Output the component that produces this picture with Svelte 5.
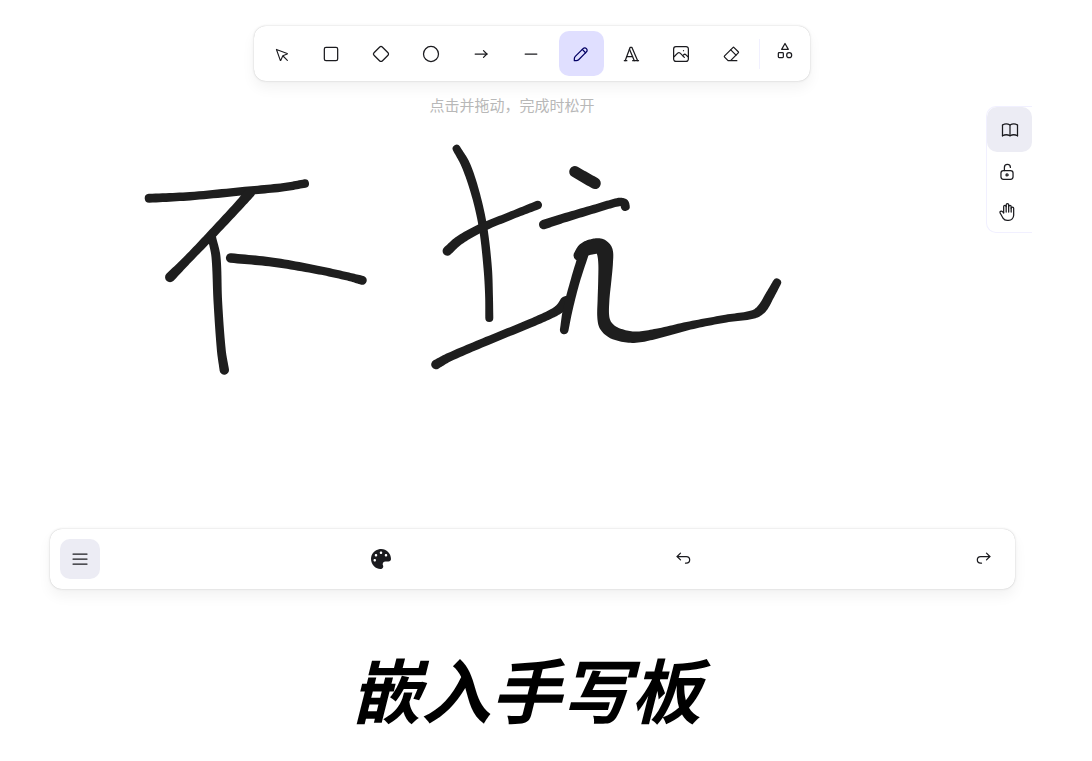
<script lang="ts">
  type Point = [number, number, number];

  const tools = [
    { id: 'select', label: '选择', box: 22, paths: ['M6 6l4.153 11.793a.365.365 0 0 0 .331.207.366.366 0 0 0 .332-.207L13 13l4.787-1.994a.355.355 0 0 0 .213-.323.355.355 0 0 0-.213-.323L6 6z', 'M13.5 13.5L18 18'] },
    { id: 'rectangle', label: '矩形', box: 24, paths: ['M6 4h12a2 2 0 0 1 2 2v12a2 2 0 0 1-2 2H6a2 2 0 0 1-2-2V6a2 2 0 0 1 2-2z'] },
    { id: 'diamond', label: '菱形', box: 24, paths: ['M10.5 20.4l-6.9-6.9c-.781-.781-.781-2.219 0-3l6.9-6.9c.781-.781 2.219-.781 3 0l6.9 6.9c.781.781.781 2.219 0 3l-6.9 6.9c-.781.781-2.219.781-3 0z'] },
    { id: 'ellipse', label: '椭圆', box: 24, paths: ['M3 12a9 9 0 1 0 18 0a9 9 0 1 0-18 0'] },
    { id: 'arrow', label: '箭头', box: 24, paths: ['M5 12h14', 'M15 16l4-4', 'M15 8l4 4'] },
    { id: 'line', label: '线条', box: 20, paths: ['M4.167 10h11.666'] },
    { id: 'draw', label: '自由书写', box: 20, paths: ['M7.643 15.69l7.774-7.773a2.357 2.357 0 1 0-3.334-3.334L4.31 12.357a3.333 3.333 0 0 0-.977 2.357v1.953h1.953c.884 0 1.732-.352 2.357-.977Z', 'M11.25 5.417l3.333 3.333'] },
    { id: 'text', label: '文字', box: 24, paths: ['M4 20h3', 'M14 20h7', 'M6.9 15h6.9', 'M10.2 6.3L16 20', 'M5 20l6-16h2l7 16'] },
    { id: 'image', label: '插入图像', box: 20, paths: ['M12.5 6.667h.01', 'M4.91 2.625h10.18a2.284 2.284 0 0 1 2.285 2.284v10.182a2.284 2.284 0 0 1-2.284 2.284H4.909a2.284 2.284 0 0 1-2.284-2.284V4.909a2.284 2.284 0 0 1 2.284-2.284Z', 'M3.333 12.5l3.334-3.333c.773-.745 1.726-.745 2.5 0l4.166 4.166', 'M11.667 11.667l.833-.834c.774-.744 1.726-.744 2.5 0l1.667 1.667'] },
    { id: 'eraser', label: '橡皮', box: 24, paths: ['M19 20H8.5l-4.21-4.3a1 1 0 0 1 0-1.41l10-10a1 1 0 0 1 1.41 0l5 5a1 1 0 0 1 0 1.41L11.5 20', 'M18 13.3L11.7 7'] },
  ];

  const extra = { box: 24, paths: ['M12 3l-4 7h8z', 'M14 17a3 3 0 1 0 6 0a3 3 0 1 0-6 0', 'M5 14h4a1 1 0 0 1 1 1v4a1 1 0 0 1-1 1H5a1 1 0 0 1-1-1v-4a1 1 0 0 1 1-1z'] };
  const book = { box: 24, paths: ['M3 19a9 9 0 0 1 9 0a9 9 0 0 1 9 0', 'M3 6a9 9 0 0 1 9 0a9 9 0 0 1 9 0', 'M3 6v13', 'M12 6v13', 'M21 6v13'] };
  const lock = { box: 20, paths: ['M13.542 8.542H6.458a2.5 2.5 0 0 0-2.5 2.5v3.75a2.5 2.5 0 0 0 2.5 2.5h7.084a2.5 2.5 0 0 0 2.5-2.5v-3.75a2.5 2.5 0 0 0-2.5-2.5Z', 'M10 13.958a1.042 1.042 0 1 0 0-2.083 1.042 1.042 0 0 0 0 2.083Z', 'M7.4 8.5V5.4a3 3 0 0 1 6 0'] };
  const hand = { box: 24, paths: ['M8 13V5.5a1.5 1.5 0 0 1 3 0V12', 'M11 5.5v-2a1.5 1.5 0 1 1 3 0V12', 'M14 5.5a1.5 1.5 0 0 1 3 0V12', 'M17 7.5a1.5 1.5 0 0 1 3 0V16a6 6 0 0 1-6 6h-2h.208a6 6 0 0 1-5.012-2.7L7 19c-.312-.479-1.407-2.388-3.286-5.728a1.5 1.5 0 0 1 .536-2.022a1.867 1.867 0 0 1 2.28.28L8 13'] };
  const menu = { box: 20, paths: ['M3 5h14', 'M3 10h14', 'M3 15h14'] };
  const undo = { box: 20, paths: ['M7.5 10.833L4.167 7.5 7.5 4.167', 'M4.167 7.5h9.166a3.333 3.333 0 0 1 0 6.667H12.5'] };
  const redo = { box: 20, paths: ['M12.5 10.833L15.833 7.5 12.5 4.167', 'M15.833 7.5H6.667a3.333 3.333 0 1 0 0 6.667H7.5'] };

  // Each pen stroke is a list of [x, y, nib radius].
  const strokes: Point[][] = [
    [[149, 198.3, 4.5], [190, 196.2, 4.2], [245, 191, 4.2], [284, 187.2, 4.2], [305, 183.5, 4.2]],
    [[250, 192.5, 5.2], [240, 204, 4.8], [213, 233, 4.6], [188, 259, 4.4], [170, 277.3, 5]],
    [[212, 238, 4.2], [216, 257, 4.5], [217.8, 301, 4.3], [221.3, 350, 4.4], [224.3, 370, 4.7]],
    [[230.7, 258, 4.8], [273, 262.2, 4.6], [317, 269.8, 4.2], [347, 276.3, 4.1], [362.3, 280.3, 4.5]],
    [[456.5, 148.5, 4], [466, 165.5, 4.5], [476, 195.5, 4.3], [483.3, 229, 4.2], [487.7, 268, 4.2], [489, 295, 3.9], [489.3, 318, 4]],
    [[447.3, 251, 4.8], [459, 240.5, 4.6], [481, 228, 4.3], [510, 216, 4], [537.7, 205, 4.3]],
    [[436, 364.5, 4.8], [449, 357.3, 4.4], [487, 341, 4.2], [530, 323.4, 4.2], [553, 313, 4.4], [560.5, 307.8, 4.8], [565.5, 301.5, 5.4]],
    [[564.2, 330, 4.3], [567.7, 310, 4.8], [575, 281.7, 4.7], [583.3, 255, 5]],
    [[574.8, 171.7, 5.6], [595, 183.3, 5.8]],
    [[543.8, 224.5, 4.8], [563, 218.3, 4.5], [600, 207.3, 4.2], [619, 202, 4.2], [624.3, 203, 4.3], [625.3, 206.5, 4.5]],
    [[579, 255.5, 5.6], [584, 250, 7], [591, 247, 7.6], [600, 246.3, 7.8], [604.5, 251, 8.2], [605.6, 262, 7.4], [604.8, 280, 6.6], [603.5, 300, 5.9], [603.3, 317, 6], [606, 326, 6.6], [615, 333.3, 6.4], [634, 337.2, 5.7], [657, 333.6, 5], [690, 325.5, 4.2], [726, 318.6, 3.9], [753.3, 314.4, 4.3], [762, 308.5, 4.8], [769.5, 296, 4.6], [777, 282.5, 4.2]],
  ];

  function spline(points: Point[]): Point[] {
    const out: Point[] = [];
    for (let i = 0; i < points.length - 1; i++) {
      const p0 = points[Math.max(i - 1, 0)];
      const p1 = points[i];
      const p2 = points[i + 1];
      const p3 = points[Math.min(i + 2, points.length - 1)];
      const m1 = Math.hypot(p2[0] - p1[0], p2[1] - p1[1]);
      const before = i === 0 ? 0 : Math.hypot(p1[0] - p0[0], p1[1] - p0[1]);
      const after = i + 2 >= points.length ? 0 : Math.hypot(p3[0] - p2[0], p3[1] - p2[1]);
      for (let s = 0; s < 12; s++) {
        const t = s / 12;
        const t2 = t * t;
        const t3 = t2 * t;
        const mix = (k: number) => {
          const a = ((p2[k] - p0[k]) / (m1 + before)) * m1;
          const b = ((p3[k] - p1[k]) / (m1 + after)) * m1;
          return (2 * t3 - 3 * t2 + 1) * p1[k] + (t3 - 2 * t2 + t) * a + (3 * t2 - 2 * t3) * p2[k] + (t3 - t2) * b;
        };
        out.push([mix(0), mix(1), mix(2)]);
      }
    }
    out.push(points[points.length - 1]);
    return out;
  }

  function outline(points: Point[]): string {
    const line = spline(points);
    const left: string[] = [];
    const right: string[] = [];
    line.forEach(([x, y, r], i) => {
      const a = line[Math.max(i - 1, 0)];
      const b = line[Math.min(i + 1, line.length - 1)];
      const len = Math.hypot(b[0] - a[0], b[1] - a[1]) || 1;
      const nx = (-(b[1] - a[1]) / len) * r;
      const ny = ((b[0] - a[0]) / len) * r;
      left.push(`${(x + nx).toFixed(2)} ${(y + ny).toFixed(2)}`);
      right.unshift(`${(x - nx).toFixed(2)} ${(y - ny).toFixed(2)}`);
    });
    const r0 = line[0][2];
    const r1 = line[line.length - 1][2];
    return `M${left.join('L')}A${r1} ${r1} 0 0 0 ${right.join('L')}A${r0} ${r0} 0 0 0 ${left[0]}Z`;
  }

  let active = $state('draw');
</script>

{#snippet icon(shape: { box: number; paths: string[] })}
  <svg class="icon" viewBox="0 0 {shape.box} {shape.box}" stroke-width={shape.box === 24 ? 1.5 : 1.25} aria-hidden="true">
    {#each shape.paths as d}
      <path {d} />
    {/each}
  </svg>
{/snippet}

<main>
  <section class="board">
    <svg class="ink" viewBox="32 0 1000 589" preserveAspectRatio="xMidYMin meet" aria-hidden="true">
      {#each strokes as stroke}
        <path d={outline(stroke)} />
      {/each}
    </svg>

    <div class="island toolbar" role="toolbar">
      {#each tools as tool (tool.id)}
        <button
          class="tool"
          class:active={active === tool.id}
          aria-label={tool.label}
          aria-pressed={active === tool.id}
          onclick={() => (active = tool.id)}
        >
          {@render icon(tool)}
        </button>
      {/each}
      <span class="divider"></span>
      <button class="small extra" aria-label="更多工具">{@render icon(extra)}</button>
    </div>

    <div class="stage">
      <p class="hint">点击并拖动，完成时松开</p>
      <aside class="side">
        <button class="tool filled" aria-label="素材库">{@render icon(book)}</button>
        <button class="small" aria-label="锁定">{@render icon(lock)}</button>
        <button class="small" aria-label="抓手">{@render icon(hand)}</button>
      </aside>
    </div>

    <footer class="island bottom">
      <button class="small filled" aria-label="菜单">{@render icon(menu)}</button>
      <button class="small" aria-label="样式">
        <svg class="icon solid" viewBox="0 0 512 512" aria-hidden="true">
          <path d="M204.3 5C104.9 24.4 24.8 104.3 5.2 203.4c-37 187 131.7 326.4 258.8 306.7 41.2-6.4 61.4-54.6 42.5-91.7-23.1-45.4 9.9-98.4 60.9-98.4h79.7c35.8 0 64.8-29.6 64.9-65.3C511.5 97.1 368.1-26.9 204.3 5zM96 320c-17.7 0-32-14.3-32-32s14.3-32 32-32 32 14.3 32 32-14.3 32-32 32zm32-128c-17.7 0-32-14.3-32-32s14.3-32 32-32 32 14.3 32 32-14.3 32-32 32zm128-64c-17.7 0-32-14.3-32-32s14.3-32 32-32 32 14.3 32 32-14.3 32-32 32zm128 64c-17.7 0-32-14.3-32-32s14.3-32 32-32 32 14.3 32 32-14.3 32-32 32z" />
        </svg>
      </button>
      <button class="small" aria-label="撤销">{@render icon(undo)}</button>
      <button class="small" aria-label="重做">{@render icon(redo)}</button>
    </footer>
  </section>

  <h1>嵌入手写板</h1>
</main>

<style>
  :global(body) {
    background: #fff;
  }

  main {
    padding: 0 60px 0 32px;
    font-family: 'Noto Sans CJK SC', sans-serif;
  }

  .board {
    position: relative;
    display: flex;
    flex-direction: column;
    padding-top: 26px;
  }

  .ink {
    position: absolute;
    inset: 0;
    width: 100%;
    height: 100%;
    fill: #1e1e1e;
    pointer-events: none;
  }

  .island {
    display: flex;
    background: #fff;
    border-radius: 12px;
    box-shadow:
      0 0 1px rgba(0, 0, 0, 0.2),
      0 0 3px rgba(0, 0, 0, 0.1),
      0 7px 14px rgba(0, 0, 0, 0.05);
  }

  .toolbar {
    align-self: center;
    align-items: center;
    gap: 5px;
    padding: 5px;
  }

  button {
    display: flex;
    align-items: center;
    justify-content: center;
    flex: none;
    padding: 0;
    border: 0;
    background: transparent;
    color: #1b1b1f;
    cursor: pointer;
  }

  .tool {
    width: 45px;
    height: 45px;
    border-radius: 10px;
  }

  .toolbar .tool {
    justify-content: flex-start;
    padding-left: 12px;
  }

  .small {
    width: 40px;
    height: 40px;
    border-radius: 10px;
  }

  .active {
    background: #e0dfff;
    color: #030064;
  }

  .filled {
    background: #ececf4;
  }

  .extra {
    align-self: flex-start;
  }

  .divider {
    width: 1px;
    height: 30px;
    background: #f1f0ff;
  }

  .icon {
    flex: none;
    width: 20px;
    height: 20px;
    fill: none;
    stroke: currentColor;
    stroke-linecap: round;
    stroke-linejoin: round;
  }

  .solid {
    fill: currentColor;
    stroke: none;
  }

  .stage {
    display: grid;
    min-height: 448px;
  }

  .hint,
  .side {
    grid-area: 1 / 1;
  }

  .hint {
    margin: 12px 40px 0 0;
    font-size: 15px;
    line-height: 24px;
    text-align: center;
    color: #b8b8b8;
  }

  .side {
    justify-self: end;
    align-self: start;
    margin-top: 25px;
    border: 1px solid #f1f0ff;
    border-right: 0;
    border-radius: 10px 0 0 10px;
  }

  .bottom {
    justify-content: space-between;
    margin: 0 17px 0 18px;
    padding: 10px 11px 10px 10px;
  }

  h1 {
    margin: 47px 0 0;
    padding-right: 12px;
    font-size: 70px;
    line-height: 104px;
    font-weight: 700;
    font-style: italic;
    text-align: center;
    color: #000;
  }
</style>
